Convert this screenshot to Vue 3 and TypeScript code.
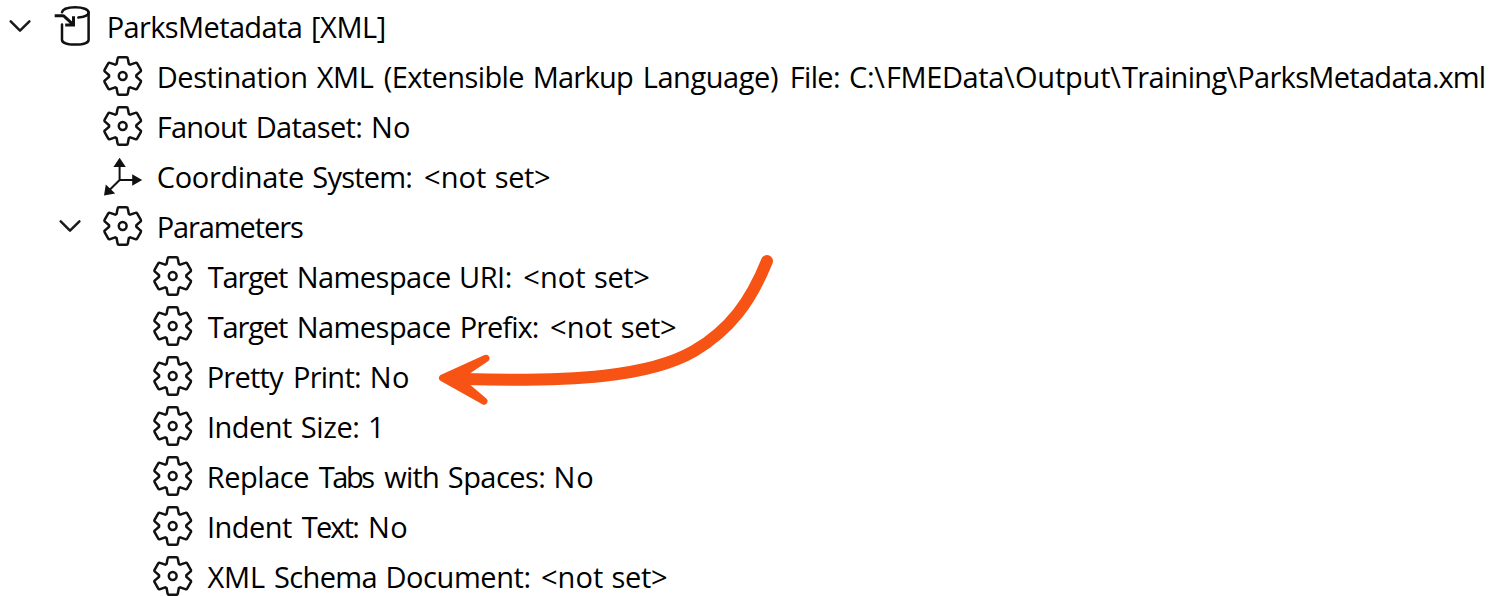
<script setup lang="ts">
type IconName = 'gear' | 'writer' | 'axes'
// A run is a piece of text with the left and right edge of its ink, in row pixels.
type Run = [text: string, left: number, right: number]
interface Row {
  level: number
  icon: IconName
  expanded?: boolean
  runs: Run[]
}

const FONT_SIZE = 29
const FONT = `${FONT_SIZE}px "Open Sans"`
const INDENT = 50
const TEXT_START = 106

const notSet = (x: number): Run[] => [['<not', x, x + 61], ['set>', x + 70.7, x + 125]]

const rows: Row[] = [
  { level: 0, icon: 'writer', expanded: true, runs: [['ParksMetadata', 108.7, 300.7], ['[XML]', 313, 384.8]] },
  {
    level: 1, icon: 'gear', runs: [
      ['Destination', 158.7, 306.3], ['XML', 316.7, 373.7], ['(Extensible', 384.7, 523.3],
      ['Markup', 534.7, 633], ['Language)', 644.7, 778], ['File:', 791.7, 839],
      ['C:\\', 850, 885.3], ['FMEData\\', 888, 1015], ['Output\\', 1016, 1121.3],
      ['Training\\', 1122, 1237.5], ['ParksMetadata', 1239.3, 1430.5], ['.xml', 1434, 1483.7],
    ],
  },
  { level: 1, icon: 'gear', runs: [['Fanout', 158.7, 247], ['Dataset:', 257.7, 361.3], ['No', 373, 409]] },
  { level: 1, icon: 'axes', runs: [['Coordinate', 157.8, 303], ['System:', 313.3, 411.3], ...notSet(425)] },
  { level: 1, icon: 'gear', expanded: true, runs: [['Parameters', 158.7, 303]] },
  { level: 2, icon: 'gear', runs: [['Target', 207.7, 288], ['Namespace', 298.7, 450], ['URI:', 461, 510.7], ...notSet(524.3)] },
  { level: 2, icon: 'gear', runs: [['Target', 207.7, 288], ['Namespace', 298.7, 450], ['Prefix:', 461.7, 537.7], ...notSet(551)] },
  { level: 2, icon: 'gear', runs: [['Pretty', 208.7, 284], ['Print:', 295, 360], ['No', 371.7, 408]] },
  { level: 2, icon: 'gear', runs: [['Indent', 209, 292], ['Size:', 301.8, 358.3], ['1', 370, 380]] },
  { level: 2, icon: 'gear', runs: [['Replace', 208.7, 308.3], ['Tabs', 318.7, 374.3], ['with', 384.3, 438], ['Spaces:', 448.8, 544.3], ['No', 555.5, 592.3]] },
  { level: 2, icon: 'gear', runs: [['Indent', 209, 292], ['Text:', 301.7, 358.3], ['No', 370, 406.3]] },
  { level: 2, icon: 'gear', runs: [['XML', 207.4, 265], ['Schema', 275, 375.5], ['Document:', 387.5, 529.5], ...notSet(541.9)] },
]

const ctx = document.createElement('canvas').getContext('2d')!
ctx.font = FONT

// Spreads each run over its ink extent and keeps the gaps between runs in step.
function layout(row: Row) {
  let cursor = TEXT_START + row.level * INDENT
  return row.runs.map(([text, left, right]) => {
    const m = ctx.measureText(text)
    const ink = m.actualBoundingBoxRight + m.actualBoundingBoxLeft
    const spacing = text.length > 1 ? (right - left - ink) / (text.length - 1) : 0
    const origin = left + m.actualBoundingBoxLeft
    const gap = origin - cursor
    cursor = origin + m.width + spacing * text.length
    return { text, style: { marginLeft: `${gap.toFixed(2)}px`, letterSpacing: `${spacing.toFixed(3)}px` } }
  })
}
const lines = rows.map((row) => ({ ...row, words: layout(row) }))

function gearPath(): string {
  const parts: string[] = []
  for (let i = 0; i < 6; i++) {
    const a = (i * Math.PI) / 3
    const p = (x: number, y: number) =>
      `${(20 + x * Math.cos(a) - y * Math.sin(a)).toFixed(2)} ${(20 + x * Math.sin(a) + y * Math.cos(a)).toFixed(2)}`
    parts.push(
      `${i ? 'L' : 'M'}${p(-6.1, -12.2)}L${p(-5.1, -17.5)}Q${p(-4.9, -18.8)} ${p(-3.7, -18.8)}` +
      `L${p(3.7, -18.8)}Q${p(4.9, -18.8)} ${p(5.1, -17.5)}L${p(6.1, -12.2)}`,
    )
  }
  return parts.join('') + 'Z'
}
const gear = gearPath()
</script>

<template>
  <main class="tree">
    <div v-for="(row, i) in lines" :key="i" class="row" :class="`level-${row.level}`">
      <svg class="chevron" viewBox="0 0 40 50">
        <path v-if="row.expanded" d="M10.7 19.3 20 28.7 29.4 19.3" />
      </svg>
      <svg v-if="row.icon === 'gear'" class="icon" viewBox="0.3 0 40 40">
        <path :d="gear" />
        <circle cx="20" cy="20" r="3.9" />
      </svg>
      <svg v-else-if="row.icon === 'writer'" class="icon" viewBox="53 6 40 40">
        <path d="M62 12.2C62.5 9.2 68 7.2 75.2 7.2C83 7.2 88.6 9.5 88.6 12.6C88.6 15.2 84.5 17 78.3 17.6" />
        <path d="M62 24.5V39.8C62 42.8 67.5 44.6 75.3 44.6S88.6 42.8 88.6 39.8V12.6" />
        <path class="arrow" d="M54.7 15.8H62.5Q63.8 15.8 64.8 16.8L73 24.4M73.5 16.2V25H65.2" />
      </svg>
      <svg v-else class="icon axes" viewBox="103 156 40 40">
        <path class="line" d="M119.6 165V180H134M119.6 180L110 189.5" />
        <path class="head" d="M119.6 157.8 125.8 167H113.4ZM142.2 180 132.2 174.2V185.8ZM104 195.6 105.8 184.6 115.2 193.6Z" />
      </svg>
      <span class="label"><span v-for="(word, j) in row.words" :key="j" class="word" :style="word.style">{{ word.text }}</span></span>
    </div>
    <svg class="pointer" viewBox="430 250 350 160">
      <path class="shaft" d="M767 261C751 301 730 330 694 351C650 376.5 575 382 464 379" />
      <path class="tip" d="M442.5 378 486 358.3 462 374.5V382.5L484 401.2Z" />
    </svg>
  </main>
</template>

<style>
body {
  background: #fff;
}
</style>

<style scoped>
.tree {
  position: relative;
  box-sizing: border-box;
  width: 1501px;
  height: 596px;
  padding-top: 2px;
  overflow: hidden;
  background: #fff;
  color: #000;
  font-family: "Open Sans", "Noto Sans", sans-serif;
  font-size: 29px;
}
.row {
  display: flex;
  height: 50px;
}
.level-1 {
  padding-left: 50px;
}
.level-2 {
  padding-left: 100px;
}
.chevron,
.icon {
  flex: none;
  fill: none;
  stroke: #111;
  stroke-width: 2.5;
  stroke-linejoin: round;
  stroke-linecap: round;
}
.chevron {
  width: 40px;
  height: 50px;
  stroke: #1a1a1a;
}
.icon {
  width: 40px;
  height: 40px;
  margin: 4px 13px 0 13px;
  overflow: visible;
}
.icon .arrow {
  stroke-width: 3;
  stroke-linejoin: miter;
  stroke-linecap: butt;
}
.axes .line {
  stroke-width: 2;
}
.axes .head {
  fill: #111;
  stroke: none;
}
.label {
  flex: none;
  line-height: 50px;
  white-space: pre;
}
.word {
  display: inline-block;
}
.pointer {
  position: absolute;
  left: 430px;
  top: 250px;
  width: 350px;
  height: 160px;
  fill: none;
  stroke: #f65314;
  stroke-linecap: round;
  stroke-linejoin: round;
}
.shaft {
  stroke-width: 12;
}
.tip {
  fill: #f65314;
  stroke-width: 7;
}
</style>
